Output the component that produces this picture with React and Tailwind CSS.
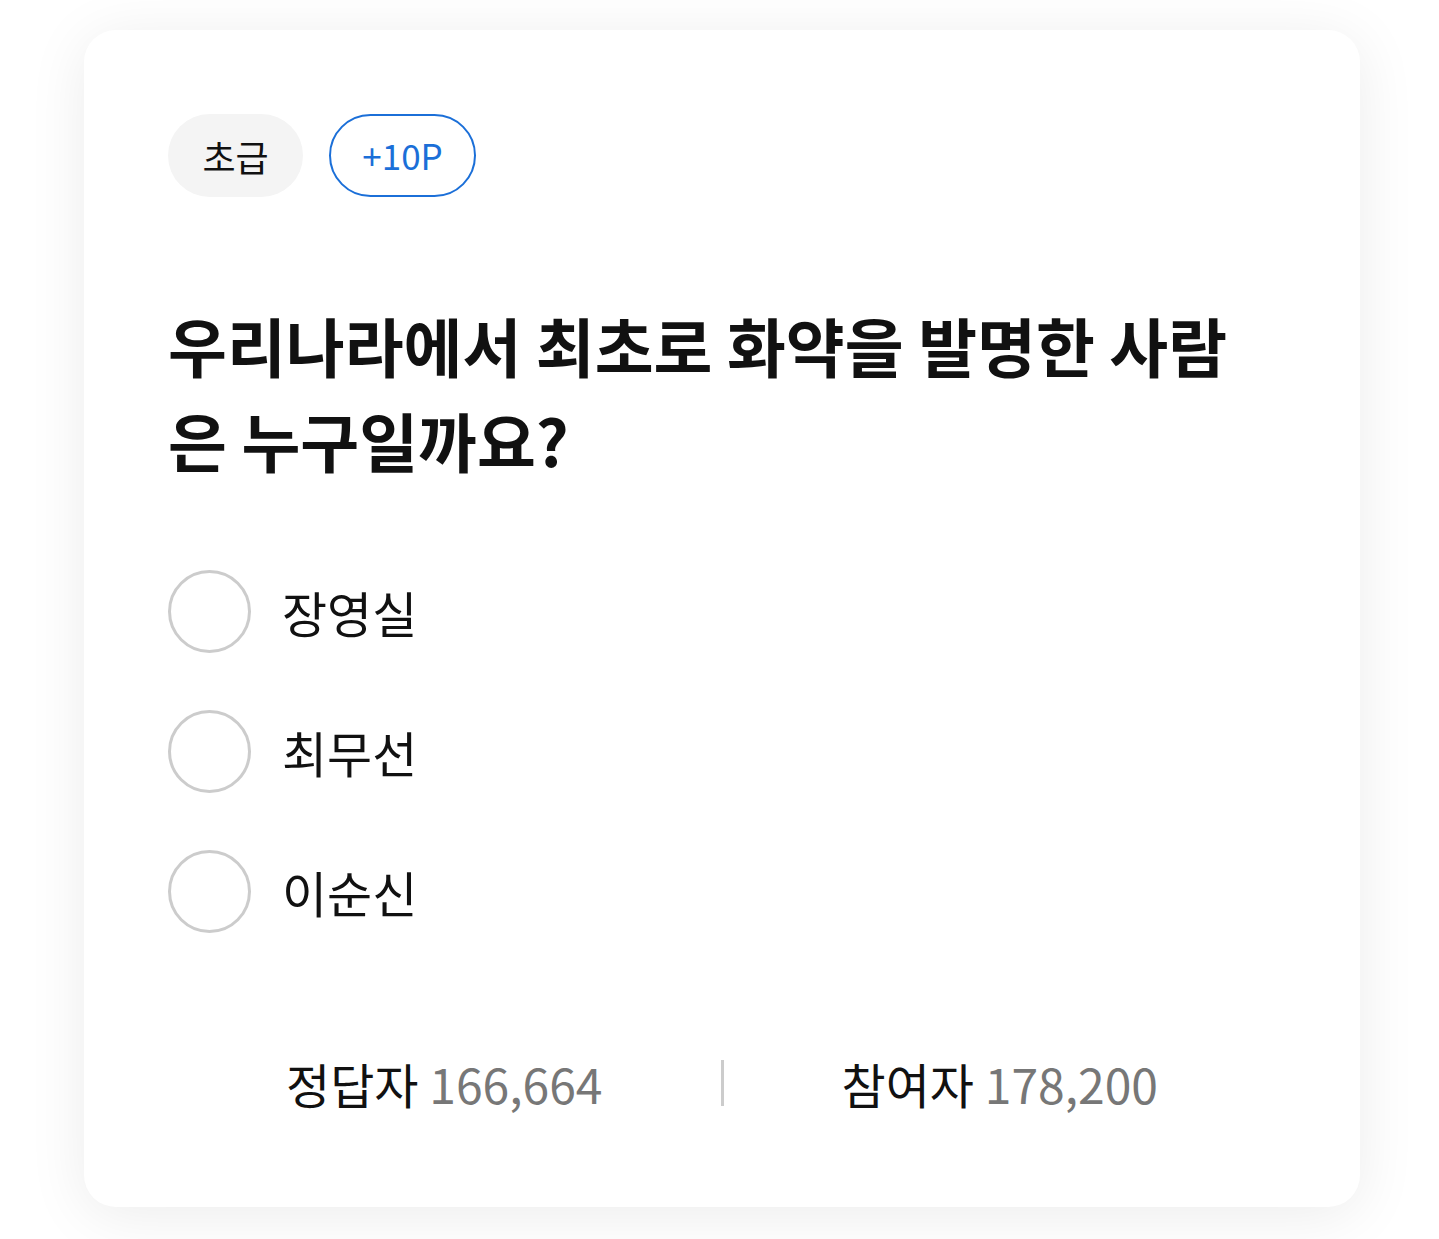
const options = ['장영실', '최무선', '이순신']

export default function App() {
  return (
    <div className="min-h-screen bg-white pt-[30px] pl-[84px]" style={{ fontFamily: '"Noto Sans CJK KR", "Noto Sans", sans-serif' }}>
      <div className="w-[1276px] rounded-[32px] bg-white px-[84px] pt-[84px] pb-[94px] shadow-[0_8px_60px_rgba(0,0,0,0.08)]">
        <div className="flex gap-[26px]">
          <span className="flex h-[83px] w-[135px] items-center justify-center rounded-full bg-[#f4f4f4] text-[36px] text-[#111]">초급</span>
          <span className="flex h-[83px] w-[147px] items-center justify-center rounded-full border-[2.5px] border-[#1b6fd8] text-[35px] text-[#1b6fd8]">+10P</span>
        </div>

        <h1 className="mt-[100px] break-all text-[64px] font-bold leading-[95px] text-[#111]">
          우리나라에서 최초로 화약을 발명한 사람은 누구일까요?
        </h1>

        <ul className="mt-[83px] flex flex-col gap-[57px]">
          {options.map((o) => (
            <li key={o} className="flex items-center gap-[31px]">
              <span className="h-[83px] w-[83px] rounded-full border-[3px] border-[#cccccc]" />
              <span className="text-[49px] text-[#111]">{o}</span>
            </li>
          ))}
        </ul>

        <div className="mt-[120px] flex items-center">
          <div className="flex-1 text-center text-[48px] leading-[60px] text-[#111]">
            정답자 <span className="text-[#777]">166,664</span>
          </div>
          <div className="h-[46px] w-[3px] bg-[#cccccc]" />
          <div className="flex-1 text-center text-[48px] leading-[60px] text-[#111]">
            참여자 <span className="text-[#777]">178,200</span>
          </div>
        </div>
      </div>
    </div>
  )
}
